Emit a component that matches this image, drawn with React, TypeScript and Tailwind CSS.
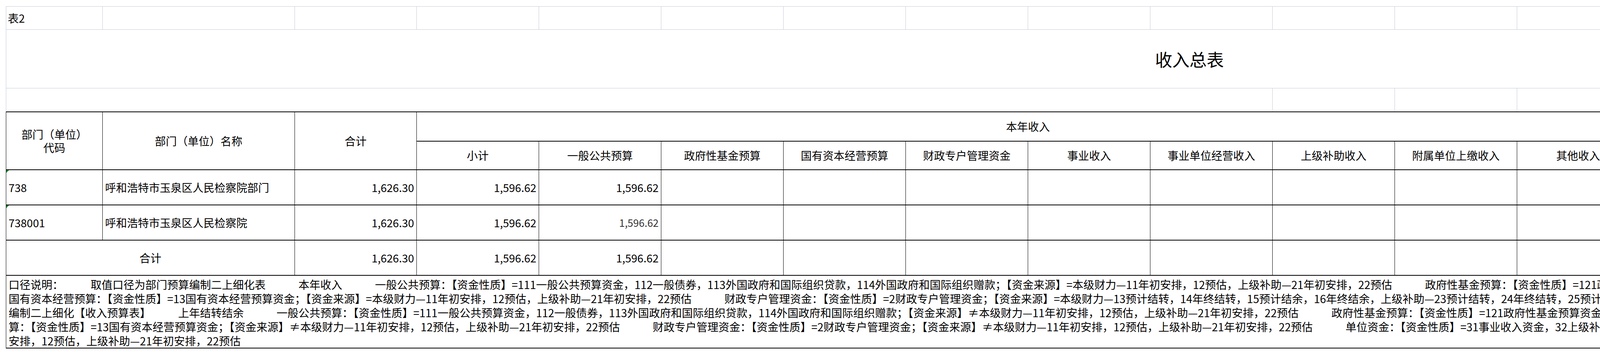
import React from "react";

const font = { fontFamily: '"Noto Sans CJK SC", "Noto Sans", sans-serif' };

const thisYear = [
  "小计",
  "一般公共预算",
  "政府性基金预算",
  "国有资本经营预算",
  "财政专户管理资金",
  "事业收入",
  "事业单位经营收入",
  "上级补助收入",
  "附属单位上缴收入",
  "其他收入",
];
const lastYear = [
  "小计",
  "一般公共预算",
  "政府性基金预算",
  "国有资本经营预算",
  "财政专户管理资金",
  "单位资金",
];

const rows = [
  { code: "738", name: "呼和浩特市玉泉区人民检察院部门", light: false },
  { code: "738001", name: "呼和浩特市玉泉区人民检察院", light: true },
];

const notes = [
  "口径说明：　　　取值口径为部门预算编制二上细化表　　　本年收入　　　一般公共预算：【资金性质】=111一般公共预算资金，112一般债券，113外国政府和国际组织贷款，114外国政府和国际组织赠款；【资金来源】=本级财力—11年初安排，12预估，上级补助—21年初安排，22预估　　　政府性基金预算：【资金性质】=121政府性基金预算资金 ，122专项债券；【资金来源】=本级财力—11年初安排，12预估，上级补助—21年初安排，22预估",
  "国有资本经营预算：【资金性质】=13国有资本经营预算资金；【资金来源】=本级财力—11年初安排，12预估，上级补助—21年初安排，22预估　　　财政专户管理资金：【资金性质】=2财政专户管理资金；【资金来源】=本级财力—13预计结转，14年终结转，15预计结余，16年终结余，上级补助—23预计结转，24年终结转，25预计结余，26年终结余 事业收入，事业单位经营收入，上级补助收入，附属单位上缴收入，其他收入：取值口径为部门预算",
  "编制二上细化【收入预算表】　　　上年结转结余　　　一般公共预算：【资金性质】=111一般公共预算资金，112一般债券，113外国政府和国际组织贷款，114外国政府和国际组织赠款；【资金来源】≠本级财力—11年初安排，12预估，上级补助—21年初安排，22预估　　　政府性基金预算：【资金性质】=121政府性基金预算资金 ，122专项债券；【资金来源】≠本级财力—11年初安排，12预估，上级补助—21年初安排，22预估　　　国有资本经营预",
  "算：【资金性质】=13国有资本经营预算资金；【资金来源】≠本级财力—11年初安排，12预估，上级补助—21年初安排，22预估　　　财政专户管理资金：【资金性质】=2财政专户管理资金；【资金来源】≠本级财力—11年初安排，12预估，上级补助—21年初安排，22预估　　　单位资金：【资金性质】=31事业收入资金，32上级补助收入资金，33附属单位上缴收入资金，34事业单位经营收入资金，39其他收入资金；【资金来源】≠本级财力—11年初",
  "安排，12预估，上级补助—21年初安排，22预估",
];

const gridCell = "border border-[#c6cbd8] h-[59px]";
const hd = "border-x border-y-2 border-black text-center align-middle font-normal";
const td = "border-x border-y-2 border-black align-middle px-[6px] h-[90px]";

const values = (light: boolean) => {
  const cells: (string | null)[] = [
    "1,596.62",
    "1,596.62",
    null, null, null, null, null, null, null, null,
    "29.69",
    "29.69",
    null, null, null, null,
  ];
  return cells.map((v, i) => (
    <td
      key={i}
      className={`${td} text-right ${light && (i === 1 || i === 11) ? "text-[26px] text-[#333]" : ""}`}
    >
      {v}
    </td>
  ));
};

const GreenMark = () => (
  <span className="absolute left-0 top-0 w-0 h-0 border-t-[7px] border-r-[7px] border-t-[#1e8a2e] border-r-transparent" />
);

export default function App() {
  return (
    <div className="bg-white w-[6074px] h-[900px] overflow-hidden pt-[16px] pl-[15px] text-black text-[28px]" style={font}>
      <table className="table-fixed border-collapse w-[6057px]">
        <colgroup>
          <col className="w-[247px]" />
          <col className="w-[492px]" />
          <col className="w-[312px]" />
          {Array.from({ length: 16 }).map((_, i) => (
            <col key={i} className="w-[313px]" />
          ))}
        </colgroup>
        <tbody>
          <tr>
            <td className={`${gridCell} px-[4px] text-[28px]`}>表2</td>
            {Array.from({ length: 18 }).map((_, i) => (
              <td key={i} className={gridCell} />
            ))}
          </tr>
          <tr>
            <td colSpan={19} className="border border-[#c6cbd8] h-[150px] text-center text-[44px]">
              收入总表
            </td>
          </tr>
          <tr>
            <td colSpan={10} className="border border-[#c6cbd8] border-b-black h-[60px]" />
            {Array.from({ length: 7 }).map((_, i) => (
              <td key={i} className="border border-[#c6cbd8] border-b-black" />
            ))}
            <td colSpan={2} className="border border-[#c6cbd8] border-b-black text-right text-[22px] pr-[2px]">
              单位：万元
            </td>
          </tr>
          <tr>
            <th rowSpan={2} className={`${hd} border-t-2 leading-[34px]`}>
              部门（单位）
              <br />
              代码
            </th>
            <th rowSpan={2} className={hd}>部门（单位）名称</th>
            <th rowSpan={2} className={hd}>合计</th>
            <th colSpan={10} className={`${hd} h-[75px]`}>本年收入</th>
            <th colSpan={6} className={hd}>上年结转结余</th>
          </tr>
          <tr>
            {[...thisYear, ...lastYear].map((t, i) => (
              <th key={i} className={`${hd} h-[73px] whitespace-nowrap`}>
                {t}
              </th>
            ))}
          </tr>
          {rows.map((r) => (
            <tr key={r.code}>
              <td className={`${td} relative`}>
                <GreenMark />
                {r.code}
              </td>
              <td className={`${td} whitespace-nowrap`}>{r.name}</td>
              <td className={`${td} text-right`}>1,626.30</td>
              {values(r.light)}
            </tr>
          ))}
          <tr>
            <td colSpan={2} className={`${td} text-center`}>合计</td>
            <td className={`${td} text-right`}>1,626.30</td>
            {values(false)}
          </tr>
          <tr>
            <td colSpan={19} className="border border-black border-b-2 h-[181px] align-top pt-[4px] px-[6px]">
              <div className="w-[6040px] overflow-hidden">
                {notes.map((n, i) => (
                  <div key={i} className="whitespace-pre leading-[36px] text-[28px]">
                    {n}
                  </div>
                ))}
              </div>
            </td>
          </tr>
        </tbody>
      </table>
    </div>
  );
}
